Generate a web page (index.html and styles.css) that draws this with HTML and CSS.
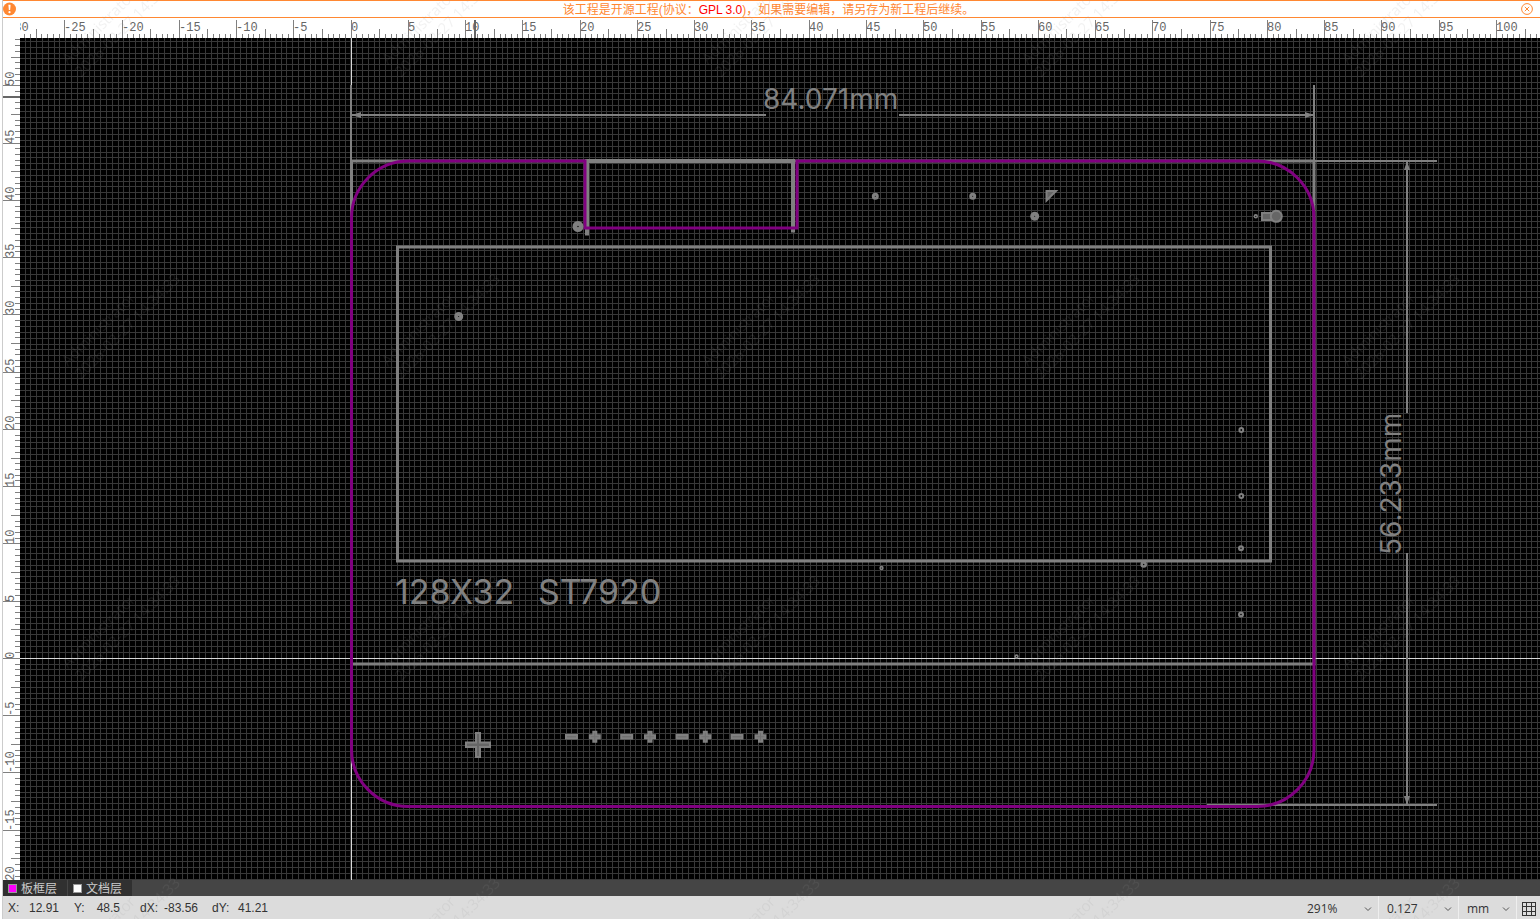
FILE: index.html
```html
<!DOCTYPE html>
<html lang="zh-CN">
<head>
<meta charset="utf-8">
<title>PCB</title>
<link rel="stylesheet" href="styles.css">
</head>
<body>
<div class="app">
  <header class="notice">
    <svg class="notice-icon" viewBox="0 0 14 14" aria-hidden="true"><circle cx="7" cy="7" r="7" fill="#ff8833"/><path d="M5.8 2.5h2.4l-.5 5.6H6.300z" fill="#fff"/><circle cx="7" cy="10.400" r="1.200" fill="#fff"/></svg>
    <p class="notice-text">该工程是开源工程(协议：<span class="license">GPL 3.0</span>)，如果需要编辑，请另存为新工程后继续。</p>
    <button class="notice-close" aria-label="关闭"><svg viewBox="0 0 12 12"><circle cx="6" cy="6" r="5.400"/><path d="M3.800 3.800l4.400 4.400M8.200 3.800l-4.400 4.400"/></svg></button>
  </header>

  <main class="workspace">
    <div class="corner"></div>
    <svg class="ruler" id="ruler-x"></svg>
    <svg class="ruler" id="ruler-y"></svg>
    <svg class="board">
      <path id="grid" class="grid"/>
      <g transform="translate(-20 -38)">
        <path id="axes" class="axes"/>

        <g class="doc">
          <path class="wide" d="M351.500 161H1314V664H351.500z"/>
          <path class="wide" d="M397.500 247H1270.500V561H397.500z"/>
          <path class="heavy" d="M587 235.500V161H793V232.500"/>
          <path class="thin" d="M351 85V161M1314 85V161M351 115H766M899 115H1314M1314 161H1437M1407 161V413M1407 553V805M1207 805H1437"/>
          <path class="arrow" d="M352 115l9-3v6zM1314 115l-9-3v6zM1407 161l-3 9h6zM1407 805l-3-9h6z"/>
        </g>

        <path class="outline" d="M408.500 161H585V228H797V161H1257A57 57 0 0 1 1314 218V749A57 57 0 0 1 1257 806.500H408.500A57 57 0 0 1 351.500 749V218A57 57 0 0 1 408.500 161z"/>

        <g class="dot">
          <circle cx="578" cy="226.500" r="3.100" stroke-width="4.800"/>
          <circle cx="458.700" cy="316.500" r="2.500" stroke-width="4"/>
          <circle cx="1034.700" cy="216.300" r="2.500" stroke-width="4"/>
          <circle cx="875.300" cy="196.300" r="2" stroke-width="3"/>
          <circle cx="972.700" cy="196.300" r="2" stroke-width="3"/>
          <circle cx="1143.700" cy="564.500" r="2" stroke-width="2.600"/>
          <circle cx="1241.300" cy="430" r="1.900" stroke-width="2"/>
          <circle cx="1241.300" cy="496" r="1.900" stroke-width="2"/>
          <circle cx="1241" cy="548.300" r="1.900" stroke-width="2.200"/>
          <circle cx="1241" cy="614.500" r="1.900" stroke-width="2.200"/>
          <circle cx="1255.800" cy="216.300" r="1.400" stroke-width="1.600"/>
          <circle cx="881.500" cy="568" r="1.400" stroke-width="1.600"/>
          <circle cx="1016.500" cy="656.500" r="1.400" stroke-width="1.600"/>
        </g>

        <g class="pad">
          <path d="M1046.500 191H1056L1046.500 200.500z"/>
          <path d="M1262 213H1272V220H1262z"/>
          <circle cx="1276.300" cy="216.300" r="5.500"/>
          <path d="M476 733h4v9.500h10v4.500h-10v10h-4v-10h-10v-4.500h10z"/>
        </g>
        <defs>
          <g id="minus"><path d="M-5.500-1.800H5.500V1.800H-5.500z"/></g>
          <g id="plus"><path d="M-1.500-5H1.500V-1.500H5V1.500H1.500V5H-1.500V1.500H-5V-1.500H-1.500z"/></g>
        </defs>
        <g class="mark">
          <use href="#minus" x="571.500" y="736.800"/><use href="#plus" x="594.800" y="736.800"/>
          <use href="#minus" x="626.700" y="736.800"/><use href="#plus" x="650" y="736.800"/>
          <use href="#minus" x="682" y="736.800"/><use href="#plus" x="705.300" y="736.800"/>
          <use href="#minus" x="737" y="736.800"/><use href="#plus" x="760.500" y="736.800"/>
        </g>

        <g class="label">
          <text class="dim" x="763" y="109">84.071mm</text>
          <text class="dim" transform="translate(1401 555) rotate(-90)">56.233mm</text>
          <text class="silk" x="395" y="604">128X32</text>
          <text class="silk" x="538" y="604">ST7920</text>
        </g>
      </g>
    </svg>
  </main>

  <nav class="layers">
    <button class="layer"><span class="swatch edge"></span><span class="layer-name">板框层</span></button>
    <button class="layer"><span class="swatch"></span><span class="layer-name">文档层</span></button>
  </nav>

  <footer class="status">
    <dl class="coords">
      <div class="pair"><dt>X:</dt><dd>12.91</dd></div>
      <div class="pair"><dt>Y:</dt><dd>48.5</dd></div>
      <div class="pair"><dt>dX:</dt><dd>-83.56</dd></div>
      <div class="pair"><dt>dY:</dt><dd>41.21</dd></div>
    </dl>
    <label class="field"><select aria-label="缩放"><option>291%</option></select><svg viewBox="0 0 8 8"><path d="M1 2.500l3 3 3-3"/></svg></label>
    <label class="field"><select aria-label="栅格尺寸"><option>0.127</option></select><svg viewBox="0 0 8 8"><path d="M1 2.500l3 3 3-3"/></svg></label>
    <label class="field unit"><select aria-label="单位"><option>mm</option></select><svg viewBox="0 0 8 8"><path d="M1 2.500l3 3 3-3"/></svg></label>
    <button class="grid-toggle" aria-label="栅格"><svg viewBox="0 0 16 16"><path d="M1.500 1.500h13v13h-13zM1.500 5.500h13M1.500 10.500h13M5.500 1.500v13M10.500 1.500v13"/></svg></button>
  </footer>
</div>

<svg class="watermark" aria-hidden="true">
  <defs>
    <pattern id="wm" x="0" y="190" width="320" height="302" patternUnits="userSpaceOnUse">
      <text transform="translate(68 177) rotate(-45)">Administrator</text>
      <text transform="translate(81 190) rotate(-45)">2026-02-27 14:34:33</text>
    </pattern>
  </defs>
  <rect width="100%" height="100%" fill="url(#wm)"/>
</svg>
<script src="board.js"></script>
</body>
</html>
```
FILE: styles.css
```css
* { box-sizing: border-box; }

body {
  margin: 0;
  background: #fff;
  font-family: "Liberation Sans", "Noto Sans CJK SC", sans-serif;
  font-size: 12px;
  color: #333;
}

button, select {
  margin: 0;
  padding: 0;
  border: 0;
  background: none;
  font: inherit;
  color: inherit;
}

.app {
  display: flex;
  flex-direction: column;
  height: 100vh;
  margin-left: 2px;
  border-left: 1px solid #ccc;
  overflow: hidden;
}

.notice {
  display: flex;
  align-items: center;
  flex: none;
  height: 18px;
  padding-right: 7px;
  border-top: 1px solid #ff8833;
  border-bottom: 1px solid #ff8833;
  color: #ff8833;
}
.notice-icon { width: 13px; height: 14px; }
.notice-text {
  flex: 1;
  margin: 0;
  padding-top: 2px;
  line-height: 16px;
  text-align: center;
  white-space: nowrap;
}
.license { color: #f00; }
.notice-close { display: flex; }
.notice-close svg {
  width: 12px;
  height: 12px;
  fill: none;
  stroke: #ff8833;
}

.workspace {
  display: grid;
  flex: 1;
  min-height: 0;
  grid-template: 20px 1fr / 17px 1fr;
}
.workspace svg {
  display: block;
  width: 100%;
  height: 100%;
  min-width: 0;
  min-height: 0;
  overflow: hidden;
}
.ruler path {
  fill: none;
  stroke: #808080;
  shape-rendering: crispEdges;
}
.ruler .cursor {
  stroke: #666;
  stroke-width: 2px;
}
.ruler text {
  font-family: "Liberation Mono", monospace;
  font-size: 12px;
  fill: #666;
}

.board { background: #000; }
.grid {
  fill: none;
  stroke: #383838;
  shape-rendering: crispEdges;
}
.axes {
  fill: none;
  stroke: #d8d8d8;
  shape-rendering: crispEdges;
}
.doc path { fill: none; stroke: #808080; }
.doc .wide { stroke-width: 3px; }
.doc .heavy { stroke-width: 4px; }
.doc .thin { stroke-width: 2px; }
.doc .arrow { fill: #808080; stroke: none; }
.outline { fill: none; stroke: #800080; stroke-width: 3px; }
.dot circle { fill: #000; stroke: #808080; }
.pad { fill: #666; stroke: #808080; stroke-width: 2px; }
.mark { fill: #707070; stroke: #808080; stroke-width: 2px; }
.label { fill: #808080; font-family: Inter, sans-serif; font-weight: 400; }
.dim { font-size: 28px; }
.silk { font-size: 34px; }

.layers {
  display: flex;
  flex: none;
  gap: 1px;
  height: 16px;
  background: #454545;
}
.layer {
  display: flex;
  align-items: center;
  gap: 4px;
  width: 64px;
  padding-left: 5px;
  background: #303030;
  color: #ccc;
  line-height: 14px;
  white-space: nowrap;
}
.layer-name { padding-top: 2px; }
.swatch {
  flex: none;
  width: 9px;
  height: 9px;
  border: 1px solid #999;
  background: #fff;
}
.swatch.edge { background: #f0f; }

.status {
  display: flex;
  flex: none;
  height: 23px;
  background: #dcdcdc;
}
.coords {
  display: flex;
  flex: 1;
  gap: 14px;
  margin: 0;
  padding-left: 5px;
  line-height: 24px;
}
.pair { display: flex; justify-content: space-between; width: 52px; padding-right: 1px; }
.pair:nth-child(2) { padding-right: 6px; }
.pair:nth-child(3) { width: 58px; padding-right: 0; }
.pair:nth-child(4) { width: 57px; }
.pair dd { margin: 0; }
.field {
  display: flex;
  align-items: center;
  width: 80px;
  padding: 2px 6px 0 8px;
  border-right: 1px solid #eee;
  font-family: "Open Sans", sans-serif;
}
.field.unit { width: 58px; }
.field select { flex: 1; min-width: 0; appearance: none; }
.field svg { width: 8px; height: 8px; fill: none; stroke: #555; }
.grid-toggle { display: flex; align-items: center; padding: 2px 3px 0 4px; }
.grid-toggle svg { width: 16px; height: 16px; fill: none; stroke: #333; shape-rendering: crispEdges; }

.watermark {
  position: absolute;
  inset: 0;
  width: 100%;
  height: 100%;
  pointer-events: none;
}
.watermark text {
  font-family: "Open Sans", sans-serif;
  font-size: 15px;
  fill: #909090;
  fill-opacity: 0.13;
}
```
FILE: board.js
```js
const PX_PER_MM = 11.454;
const GRID = 5.818;
const NS = "http://www.w3.org/2000/svg";
const canvas = { left: 20, top: 38 };

function make(parent, name, attrs, text) {
  const node = document.createElementNS(NS, name);
  for (const key in attrs) node.setAttribute(key, attrs[key]);
  if (text !== undefined) node.textContent = text;
  parent.appendChild(node);
}

function tickLength(i, lengths) {
  if (i % 10 === 0) return lengths[0];
  return i % 5 === 0 ? lengths[1] : lengths[2];
}

function drawRulerX() {
  const svg = document.getElementById("ruler-x");
  svg.replaceChildren();
  const origin = 351.1 - canvas.left;
  const last = Math.ceil((svg.clientWidth - origin) / PX_PER_MM * 2);
  let d = "";
  for (let i = -60; i <= last; i++) {
    const x = Math.floor(origin + i * PX_PER_MM / 2);
    d += `M${x + 0.5} 20v${-tickLength(i, [18, 9, 4])}`;
    if (i % 10 === 0) make(svg, "text", { x: x, y: 13 }, i / 2);
  }
  make(svg, "path", { d });
  make(svg, "path", { class: "cursor", d: "M455 2V20" });
}

function drawRulerY() {
  const svg = document.getElementById("ruler-y");
  svg.replaceChildren();
  const origin = 658.45 - canvas.top;
  const last = Math.ceil((svg.clientHeight - origin) / PX_PER_MM * 2) + 10;
  let d = "";
  for (let i = -108; i <= last; i++) {
    const y = Math.floor(origin + i * PX_PER_MM / 2);
    d += `M17 ${y + 0.5}h${-tickLength(i, [17, 9, 5])}`;
    if (i % 10 === 0) make(svg, "text", { transform: `translate(11 ${y + 1}) rotate(-90)` }, i === 0 ? 0 : -i / 2);
  }
  make(svg, "path", { d });
  make(svg, "path", { class: "cursor", d: "M0 59H17" });
}

function drawGrid() {
  const { clientWidth: w, clientHeight: h } = document.querySelector(".board");
  let d = "";
  for (let k = -57; ; k++) {
    const x = Math.floor(350.88 + k * GRID) - canvas.left;
    if (x > w) break;
    if (x >= 0) d += `M${x + 0.5} 0V${h}`;
  }
  for (let k = -107; ; k++) {
    const y = Math.floor(658.2 + k * GRID) - canvas.top;
    if (y > h) break;
    if (y >= 0) d += `M0 ${y + 0.5}H${w}`;
  }
  document.getElementById("grid").setAttribute("d", d);
  document.getElementById("axes").setAttribute("d",
    `M351.5 ${canvas.top}V${canvas.top + h}M${canvas.left} 658.5H${canvas.left + w}`);
}

function draw() {
  drawRulerX();
  drawRulerY();
  drawGrid();
}

draw();
window.addEventListener("resize", draw);
```
